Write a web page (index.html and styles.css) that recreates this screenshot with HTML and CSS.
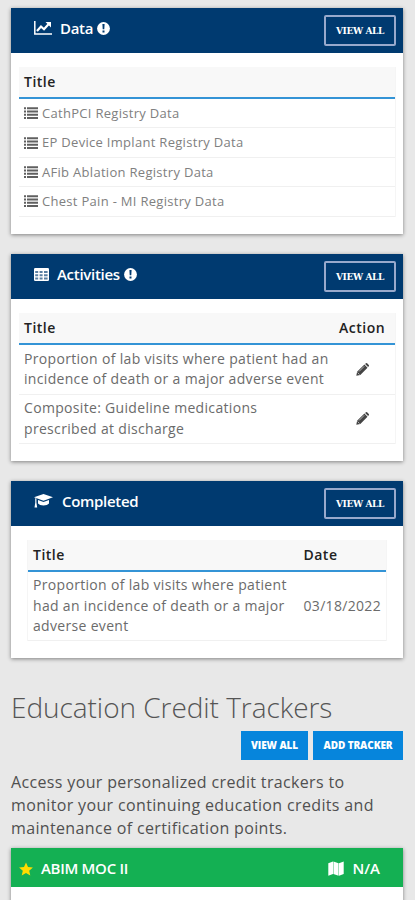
FILE: index.html
```html
<!DOCTYPE html>
<html lang="en">
<head>
<meta charset="utf-8">
<title>Dashboard</title>
<link rel="stylesheet" href="styles.css">
</head>
<body>
<svg class="defs" width="0" height="0">
  <symbol id="alert" viewBox="0 0 13 13"><circle cx="6.5" cy="6.5" r="6.4" fill="#fff"/><path d="M5.4 2h2.2l-.3 5.2H5.7zM5.5 8.5h2v2h-2z" fill="#003a70"/></symbol>
  <symbol id="list" viewBox="0 0 14 12"><path d="M0 .3h2v2H0zM0 3.5h2v2H0zM0 6.7h2v2H0zM0 9.9h2v2H0zM3 .3h11v2H3zM3 3.5h11v2H3zM3 6.7h11v2H3zM3 9.9h11v2H3z"/></symbol>
  <symbol id="pencil" viewBox="0 0 13 13"><path d="M.3 12.7l.8-4L8.400 1.600l3.100 3.100L4.300 11.900zM9.100 1l.8-.7q.6-.5 1.200 0l1.700 1.700q.5.6 0 1.200l-.7.8z"/><path d="M3 8.500L8.200 3.300M1.500 9.500l2 2" stroke="#fff" stroke-width=".6"/></symbol>
</svg>
<main>
  <section class="card data">
    <header class="bar">
      <h2><svg class="chart" viewBox="0 0 18 14"><path d="M.8 0v13H18" fill="none" stroke="#fff" stroke-width="1.500"/><path d="M3 10l4-4.500 3 2.700 4.500-5" fill="none" stroke="#fff" stroke-width="2.200"/><path d="M11.500 1H17v5.500z" fill="#fff"/></svg><span class="name">Data</span><svg class="alert"><use href="#alert"/></svg></h2>
      <a class="outline">VIEW ALL</a>
    </header>
    <table>
      <thead><tr><th>Title</th></tr></thead>
      <tbody>
        <tr><td><div class="item"><svg><use href="#list"/></svg><span>CathPCI Registry Data</span></div></td></tr>
        <tr><td><div class="item"><svg><use href="#list"/></svg><span>EP Device Implant Registry Data</span></div></td></tr>
        <tr><td><div class="item"><svg><use href="#list"/></svg><span>AFib Ablation Registry Data</span></div></td></tr>
        <tr><td><div class="item"><svg><use href="#list"/></svg><span>Chest Pain - MI Registry Data</span></div></td></tr>
      </tbody>
    </table>
  </section>

  <section class="card activities">
    <header class="bar">
      <h2><svg class="grid" viewBox="0 0 15 13"><rect width="15" height="13" rx="1.300" fill="#fff"/><path d="M1.200 3h3v2h-3zM5.600 3h3v2h-3zM10 3h3.600v2H10zM1.200 6.300h3v2h-3zM5.600 6.300h3v2h-3zM10 6.300h3.600v2H10zM1.200 9.600h3v2h-3zM5.600 9.600h3v2h-3zM10 9.600h3.600v2H10z" fill="#003a70" opacity=".65"/></svg><span class="name">Activities</span><svg class="alert"><use href="#alert"/></svg></h2>
      <a class="outline">VIEW ALL</a>
    </header>
    <table>
      <thead><tr><th>Title</th><th class="action">Action</th></tr></thead>
      <tbody>
        <tr><td>Proportion of lab visits where patient had an<br>incidence of death or a major adverse event</td><td class="action"><svg><use href="#pencil"/></svg></td></tr>
        <tr><td>Composite: Guideline medications<br>prescribed at discharge</td><td class="action"><svg><use href="#pencil"/></svg></td></tr>
      </tbody>
    </table>
  </section>

  <section class="card completed">
    <header class="bar">
      <h2><svg class="cap" viewBox="0 0 19 14"><path d="M9.500 0L19 3.300 9.500 6.700 0 3.300z"/><path d="M4 6l5.500 2L15 6v3.600q-1.500 2-5.500 2T4 9.600zM1.200 4.200h1.200v4.300l.8 5H.5l.8-5z"/></svg><span class="name">Completed</span></h2>
      <a class="outline">VIEW ALL</a>
    </header>
    <table>
      <thead><tr><th>Title</th><th class="date">Date</th></tr></thead>
      <tbody>
        <tr><td>Proportion of lab visits where patient<br>had an incidence of death or a major<br>adverse event</td><td class="date">03/18/2022</td></tr>
      </tbody>
    </table>
  </section>

  <section class="trackers">
    <h1>Education Credit Trackers</h1>
    <div class="buttons"><a>VIEW ALL</a><a class="add">ADD TRACKER</a></div>
    <p>Access your personalized credit trackers to<br>monitor your continuing education credits and<br>maintenance of certification points.</p>
    <article class="tracker">
      <header>
        <svg class="star" viewBox="0 0 14 14"><path d="M7 .4l2 4.500 4.900.5-3.700 3.300 1.100 4.900L7 11.100l-4.300 2.500 1.100-4.900L.1 5.400 5 4.900z" fill="#ffdc00"/></svg>
        <span class="abim">ABIM MOC II</span>
        <svg class="map" viewBox="0 0 16 15"><path d="M.3 2.200L5 .5v12.500L.3 14.800zM5.400.5l5.200 1.700v12.600l-5.200-1.800zM11 2.200L15.700.5V13L11 14.800z" fill="#fff"/></svg>
        <span class="na">N/A</span>
      </header>
    </article>
  </section>
</main>
</body>
</html>
```
FILE: styles.css
```css
* { box-sizing: border-box; }
html { height: 100%; overflow: hidden; }
body { margin: 0; height: 900px; overflow: hidden; background: #e8e8e8; font: 14px/20.5px "Open Sans", sans-serif; color: #6b6b6b; }
.defs { position: absolute; }
h1, h2, p { margin: 0; }
svg { display: block; flex: none; }
main { padding: 8px 12px 0 11px; }
.card { background: #fff; box-shadow: 0 1px 4px rgba(0,0,0,.45); }
.data { height: 226px; margin-bottom: 20px; }
.activities { height: 207px; margin-bottom: 20px; }
.completed { height: 177px; }
.bar { height: 45px; background: #003a70; display: flex; justify-content: space-between; padding: 7px 7px 0 23px; }
.bar h2 { display: flex; align-items: center; height: 26px; font-size: 15px; line-height: 20px; font-weight: 600; color: #fff; }
.name { letter-spacing: -.3px; }
.chart { width: 18px; height: 14px; margin-right: 8px; }
.grid { width: 15px; height: 13px; margin-right: 8px; }
.cap { width: 19px; height: 14px; margin-right: 9px; fill: #fff; }
.alert { width: 13px; height: 13px; margin-left: 4px; }
.outline { width: 72px; height: 31px; border: 2px solid #98a9cc; border-radius: 2px; display: flex; align-items: center; justify-content: center; color: #fff; font: bold 9px/14px "DejaVu Serif", serif; letter-spacing: -.35px; }
table { border-collapse: separate; border-spacing: 0; width: 377px; margin: 14px 0 0 8px; border: solid #f5f5f5; border-width: 0 1px 0 0; }
th { height: 32px; padding: 1px 5px 0; background: #f8f8f8; border-bottom: 2px solid #3494d6; text-align: left; font-size: 14px; font-weight: 600; color: #222; letter-spacing: .5px; }
td { padding: 0 5px; border-bottom: 1px solid #f0f0f0; letter-spacing: .32px; white-space: nowrap; }
.data td { height: 29.4px; }
.item { display: flex; align-items: center; gap: 4px; font-size: 13px; color: #808080; letter-spacing: .3px; }
.item svg { width: 14px; height: 12px; fill: #606060; }
.activities td { height: 49.5px; }
.action { width: 56px; }
th.action { padding: 1px 0 0; }
td.action svg { width: 13px; height: 13px; fill: #444; margin-left: 12px; }
.completed table { width: 360px; margin-left: 16px; border-left-width: 1px; }
.completed td { height: 69px; }
.date { width: 87px; }
h1 { font-size: 28px; line-height: 40px; font-weight: 300; color: #555; letter-spacing: -.05px; }
.trackers { padding-top: 29px; }
.buttons { display: flex; justify-content: flex-end; gap: 5px; margin-top: 4px; }
.buttons a { width: 67px; height: 29px; background: #0685dc; color: #fff; font-size: 10px; line-height: 29px; font-weight: 800; text-align: center; letter-spacing: -.1px; }
.buttons .add { width: 90px; }
p { margin-top: 11px; font-size: 16px; line-height: 23px; color: #505050; letter-spacing: .35px; white-space: nowrap; }
.tracker { margin-top: 8px; height: 70px; background: #fff; box-shadow: 0 1px 4px rgba(0,0,0,.45); }
.tracker header { height: 39px; background: #14b053; display: flex; align-items: center; padding: 2px 23px 0 8px; font-size: 15px; font-weight: 600; color: #fff; }
.abim { letter-spacing: -.3px; }
.star { width: 14px; height: 14px; margin-right: 8px; }
.map { width: 16px; height: 15px; margin: 0 8px 0 auto; }
```
